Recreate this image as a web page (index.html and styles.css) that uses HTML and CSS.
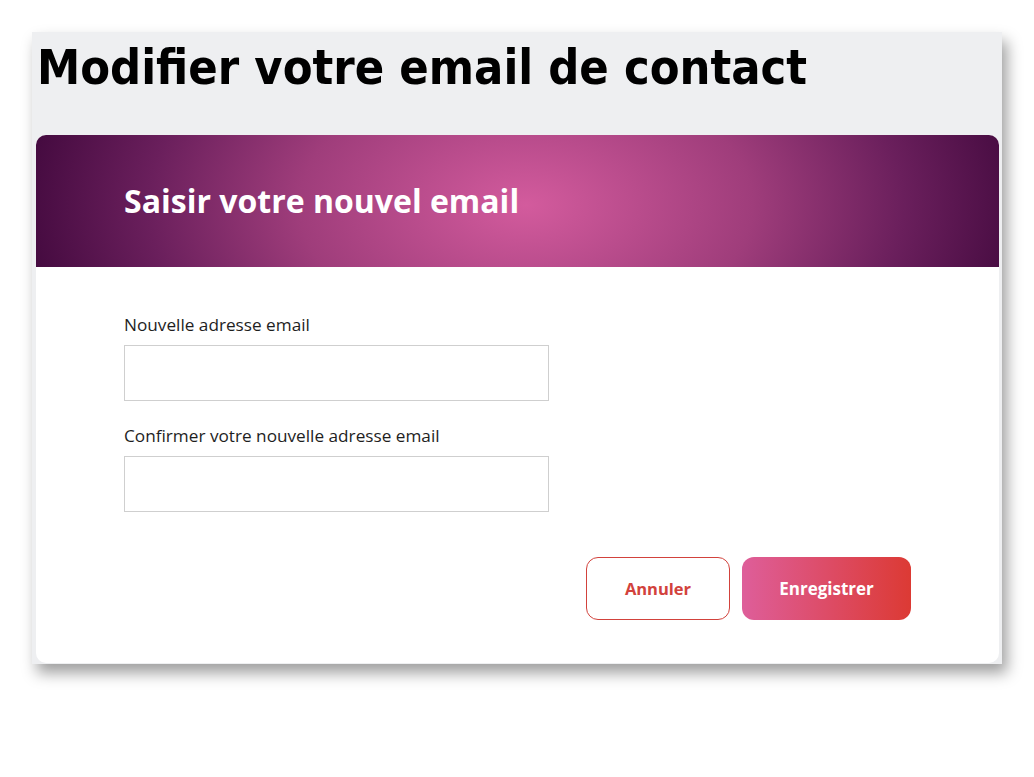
FILE: index.html
```html
<!DOCTYPE html>
<html lang="fr">
<head>
    <meta charset="UTF-8">
    <meta name="viewport" content="width=device-width, initial-scale=1.0">
    <title>Modifier votre email de contact</title>
    <link rel="stylesheet" href="styles.css">
</head>
<body>
    <div class="window">
        <h1 class="page-title">Modifier votre email de contact</h1>

        <div class="email-card">
            <div class="card-header">
                <h2>Saisir votre nouvel email</h2>
            </div>

            <form class="card-body">
                <div class="field">
                    <label for="newEmail">Nouvelle adresse email</label>
                    <input type="email" id="newEmail" class="text-input">
                </div>
                <div class="field">
                    <label for="confirmEmail">Confirmer votre nouvelle adresse email</label>
                    <input type="email" id="confirmEmail" class="text-input">
                </div>

                <div class="actions">
                    <button type="button" class="btn btn-cancel">Annuler</button>
                    <button type="submit" class="btn btn-save">Enregistrer</button>
                </div>
            </form>
        </div>
    </div>
</body>
</html>
```

FILE: styles.css
```css
body {
    margin: 0;
    padding: 32px;
    background: #ffffff;
    font-family: 'Open Sans', 'DejaVu Sans', sans-serif;
}
.window {
    width: 970px;
    background-color: #eeeff1;
    padding: 0 3px 1px 4px;
    box-sizing: border-box;
    box-shadow: 5px 9px 14px rgba(0,0,0,0.38);
}
.page-title {
    font-family: 'DejaVu Sans', sans-serif;
    font-stretch: condensed;
    font-weight: bold;
    font-size: 48.3px;
    line-height: 70px;
    margin: 0 0 33px 1px;
    color: #000;
}
.email-card {
    background: #fff;
    border-radius: 10px;
    overflow: hidden;
}
.card-header {
    height: 132px;
    display: flex;
    align-items: center;
    padding-left: 88px;
    background: radial-gradient(ellipse 540px 320px at 490px 70px, #d35b9d 0%, #9f3d7b 42%, #6a1f5c 70%, #390437 100%);
}
.card-header h2 {
    margin: 0 0 2px;
    color: #fff;
    font-size: 32px;
    font-weight: bold;
}
.card-body {
    padding: 47px 88px 43px;
}
.field {
    margin-bottom: 24px;
}
.field label {
    display: block;
    font-size: 17.2px;
    line-height: 22px;
    color: #1e1e1e;
    margin-bottom: 9px;
}
.text-input {
    display: block;
    width: 425px;
    height: 56px;
    box-sizing: border-box;
    border: 1px solid #cfcfcf;
    background: #fff;
}
.actions {
    display: flex;
    justify-content: flex-end;
    gap: 12px;
    margin-top: 45px;
}
.btn {
    height: 63px;
    border-radius: 12px;
    font-family: 'Open Sans', sans-serif;
    font-size: 16.5px;
    font-weight: bold;
    cursor: pointer;
}
.btn-cancel {
    width: 144px;
    background: #fff;
    border: 1px solid #d2423c;
    color: #d2423c;
}
.btn-save {
    width: 169px;
    border: none;
    color: #fff;
    font-size: 17px;
    background: linear-gradient(to right, #de5e9a, #dc3a34);
}
```
